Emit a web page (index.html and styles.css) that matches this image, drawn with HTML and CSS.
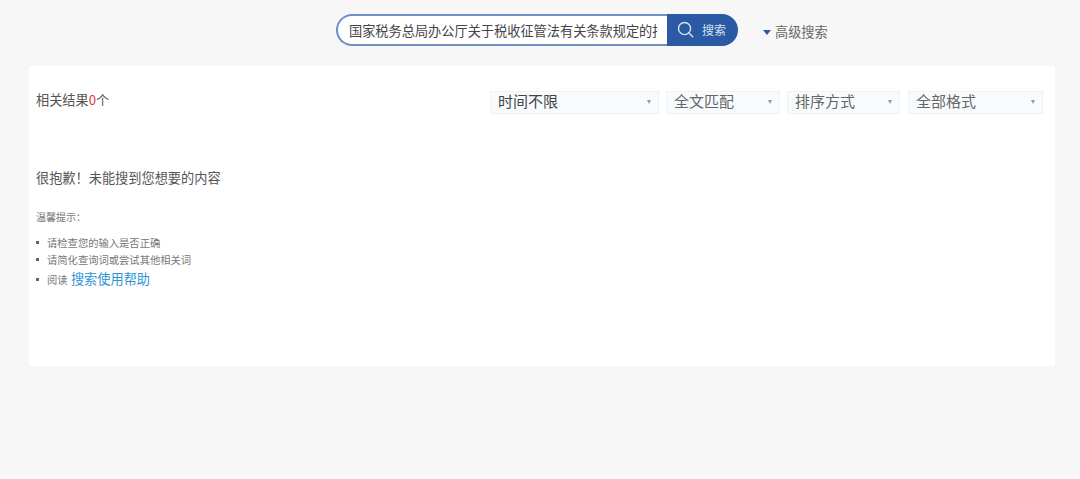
FILE: index.html
```html
<!DOCTYPE html>
<html lang="zh-CN">
<head>
<meta charset="utf-8">
<title>搜索</title>
<link rel="stylesheet" href="styles.css">
</head>
<body>
<header class="top">
  <form class="search">
    <div class="search-input"><span class="search-text">国家税务总局办公厅关于税收征管法有关条款规定的批复</span></div>
    <div class="search-btn">
      <svg class="search-icon" width="17" height="17" viewBox="0 0 18 18" fill="none" stroke="#d5e0f0" stroke-width="1.5"><circle cx="8" cy="8" r="6.4"/><path d="M12.7 12.7L16.6 16.6" stroke-linecap="round"/></svg>
      <span>搜索</span>
    </div>
  </form>
  <div class="advanced"><i class="adv-arrow"></i><span>高级搜索</span></div>
</header>
<main class="panel">
  <div class="result-bar">
    <div class="count">相关结果<em>0</em>个</div>
    <div class="filters">
      <div class="filter f-time dark"><span>时间不限</span><i></i></div>
      <div class="filter f-match"><span>全文匹配</span><i></i></div>
      <div class="filter f-sort"><span>排序方式</span><i></i></div>
      <div class="filter f-format"><span>全部格式</span><i></i></div>
    </div>
  </div>
  <h2 class="sorry">很抱歉！未能搜到您想要的内容</h2>
  <p class="tip">温馨提示：</p>
  <ul class="tips">
    <li>请检查您的输入是否正确</li>
    <li>请简化查询词或尝试其他相关词</li>
    <li class="help">阅读 <a href="#">搜索使用帮助</a></li>
  </ul>
</main>
</body>
</html>
```
FILE: styles.css
```css
* { box-sizing: border-box; }
html, body { margin: 0; height: 100%; }
body {
  background: #f7f7f7;
  font-family: "Noto Sans CJK SC", "Liberation Sans", sans-serif;
  color: #555;
  overflow: hidden;
}
.top {
  height: 66px;
  padding: 14px 0 0 336px;
  display: flex;
  align-items: flex-start;
}
.search { display: flex; width: 402px; height: 32px; }
.search-input {
  width: 331px;
  height: 32px;
  border: 2px solid #6f8fc4;
  border-right: 0;
  border-radius: 16px 0 0 16px;
  background: #fff;
  padding: 1px 0 0 11px;
  display: flex;
  align-items: center;
}
.search-text {
  display: block;
  width: 308px;
  overflow: hidden;
  white-space: nowrap;
  font-size: 13.2px;
  line-height: 20px;
  color: #444;
}
.search-btn {
  width: 71px;
  height: 32px;
  background: #2b5aa5;
  border-radius: 0 16px 16px 0;
  color: #d5e0f0;
  font-size: 12px;
  display: flex;
  align-items: center;
  padding: 0 0 2px 10px;
  gap: 8px;
}
.search-icon { flex: none; }
.advanced {
  margin: 11px 0 0 25px;
  display: flex;
  align-items: center;
  font-size: 13.2px;
  line-height: 14px;
  color: #666;
  height: 14px;
}
.adv-arrow {
  width: 0; height: 0;
  border: 4.5px solid transparent;
  border-top: 5px solid #2b5aa5;
  border-bottom: 0;
  margin-right: 4px;
}
.panel {
  margin: 0 25px 0 29px;
  width: 1026px;
  height: 300px;
  background: #fff;
  padding: 25px 12px 0 7px;
}
.result-bar {
  display: flex;
  justify-content: space-between;
  align-items: flex-start;
  height: 23px;
}
.count { font-size: 13.2px; line-height: 18px; color: #555; }
.count em { font-style: normal; color: #e8323c; }
.filters { display: flex; gap: 7px; }
.filter {
  height: 23px;
  background: #f8fbfd;
  border: 1px solid #eef2f5;
  display: flex;
  align-items: center;
  justify-content: space-between;
  padding: 0 7px 5px 7px;
  font-size: 15px;
  line-height: 21px;
  color: #666;
}
.filter.dark { color: #444; }
.filter i {
  width: 0; height: 0;
  margin-top: 4px;
  border: 2.5px solid transparent;
  border-top: 4px solid #999;
  border-bottom: 0;
}
.f-time { width: 169px; }
.f-match { width: 114px; }
.f-sort { width: 113px; }
.f-format { width: 135px; margin-left: 1px; }
.sorry {
  margin: 54px 0 0;
  font-size: 13.2px;
  font-weight: 400;
  line-height: 20px;
  color: #555;
}
.tip {
  margin: 21px 0 0;
  font-size: 10px;
  line-height: 16px;
  color: #777;
}
.tips {
  list-style: none;
  margin: 9px 0 0;
  padding: 0;
}
.tips li {
  position: relative;
  padding-left: 11px;
  font-size: 10.3px;
  line-height: 17px;
  color: #777;
}
.tips li::before {
  content: "";
  position: absolute;
  left: 0;
  top: 7px;
  width: 3px;
  height: 3px;
  background: #666;
}
.tips .help { line-height: 22px; }
.tips .help::before { top: 10px; }
.tips a { margin-left: 1px; color: #2a94d6; font-size: 13.2px; text-decoration: none; }
```
